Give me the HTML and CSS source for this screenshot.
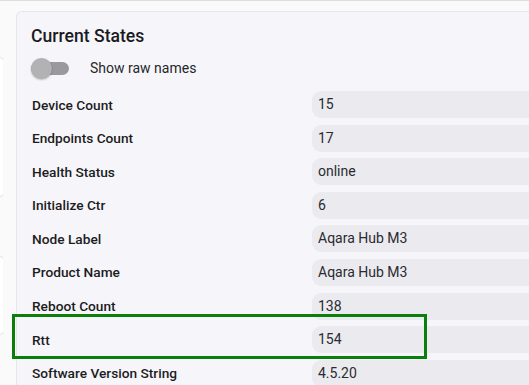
FILE: index.html
```html
<!DOCTYPE html>
<html>

<head>
    <link rel="stylesheet" href="styles.css">
</head>

<body>
    <div class="topbar"></div>
    <div class="layout">
        <div class="side">
            <div class="side-card first"></div>
            <div class="side-card second"></div>
        </div>

        <div class="card">
            <h2 class="title">Current States</h2>
            <div class="switch-row">
                <span class="switch"><span class="thumb"></span></span>
                <span class="switch-label">Show raw names</span>
            </div>

            <div class="rows">
                <div class="row">
                    <div class="label">Device Count</div>
                    <div class="value">15</div>
                </div>
                <div class="row">
                    <div class="label">Endpoints Count</div>
                    <div class="value">17</div>
                </div>
                <div class="row">
                    <div class="label">Health Status</div>
                    <div class="value">online</div>
                </div>
                <div class="row">
                    <div class="label">Initialize Ctr</div>
                    <div class="value">6</div>
                </div>
                <div class="row">
                    <div class="label">Node Label</div>
                    <div class="value">Aqara Hub M3</div>
                </div>
                <div class="row">
                    <div class="label">Product Name</div>
                    <div class="value">Aqara Hub M3</div>
                </div>
                <div class="row">
                    <div class="label">Reboot Count</div>
                    <div class="value">138</div>
                </div>
                <div class="row marked">
                    <div class="label">Rtt</div>
                    <div class="value">154</div>
                    <div class="highlight"></div>
                </div>
                <div class="row">
                    <div class="label">Software Version String</div>
                    <div class="value">4.5.20</div>
                </div>
            </div>
        </div>
    </div>
</body>

</html>
```

FILE: styles.css
```css
html,
body {
    margin: 0;
    height: 100%;
    overflow: hidden;
    background: #fafafa;
    font-family: Roboto, "Liberation Sans", sans-serif;
    color: #1f1f24;
}

.topbar {
    height: 1px;
    background: #dedede;
}

.layout {
    display: flex;
    gap: 13px;
    padding-top: 10px;
    height: 374px;
    overflow: hidden;
}

.side {
    width: 3px;
    flex: none;
    overflow: hidden;
}

.side-card {
    width: 40px;
    margin-left: -38px;
    background: #fff;
    border: 1px solid #e2e2e2;
    border-radius: 4px;
}

.side-card.first {
    margin-top: 46px;
    height: 138px;
}

.side-card.second {
    margin-top: 59px;
    height: 77px;
}

.card {
    flex: 1;
    min-width: 0;
    background: #f6f6fa;
    border: 1px solid #e6e6ea;
    border-right: none;
    border-bottom: none;
    border-radius: 6px 0 0 0;
    padding: 12px 0 0 14px;
}

.title {
    margin: 0;
    font-size: 17.6px;
    font-weight: 500;
    line-height: 24px;
    color: #1a1a1f;
}

.switch-row {
    display: flex;
    align-items: center;
    height: 24px;
    margin-top: 8px;
}

.switch {
    position: relative;
    width: 38px;
    height: 13px;
    border-radius: 7px;
    background: #9a9a9c;
}

.switch .thumb {
    position: absolute;
    left: 0;
    top: -4px;
    width: 21px;
    height: 21px;
    border-radius: 50%;
    background: #b2b2b4;
    box-shadow: 0 1px 2px rgba(0, 0, 0, .25);
}

.switch-label {
    margin-left: 21px;
    font-size: 14px;
    color: #26262b;
}

.rows {
    margin-top: 11px;
    display: flex;
    flex-direction: column;
    gap: 6.6px;
}

.row {
    position: relative;
    display: flex;
    align-items: center;
    height: 27px;
    flex: none;
}

.label {
    width: 280px;
    flex: none;
    padding-left: 1px;
    font-size: 13.7px;
    font-weight: 500;
    color: #1c1c22;
}

.value {
    flex: 1;
    height: 27px;
    line-height: 27px;
    padding-left: 6px;
    background: #eaeaef;
    border-radius: 9px 0 0 9px;
    font-size: 14px;
    color: #2a2a30;
}

.highlight {
    position: absolute;
    left: -19px;
    top: -12px;
    width: 409px;
    height: 39px;
    border: 3px solid #0b7f0b;
}
```
